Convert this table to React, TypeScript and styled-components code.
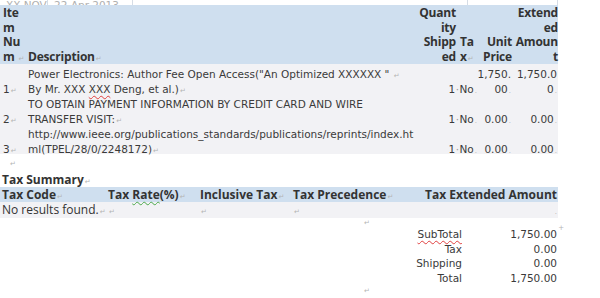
import React from 'react';
import styled, { createGlobalStyle } from 'styled-components';

const GlobalStyle = createGlobalStyle`
  html, body {
    margin: 0;
    padding: 0;
    background: #ffffff;
  }
`;

const COLS = '25px 395px 37px 24px 33px 44px';
const TAX_COLS = '106px 92px 93px 109px 158px';

const Sheet = styled.div`
  position: relative;
  width: 600px;
  height: 298px;
  overflow: hidden;
  background: #ffffff;
  color: #3a3a3a;
  font-family: 'DejaVu Sans', 'Liberation Sans', sans-serif;
  font-size: 10.5px;
`;

const TopStrip = styled.div`
  display: grid;
  grid-template-columns: 48px 85px 335px 90px;
  width: 558px;
  height: 5px;
  overflow: hidden;
`;

const StripCell = styled.div`
  display: flex;
  align-items: flex-end;
  padding-left: 6px;
  border-right: 1px solid #d6dde6;
  color: #b0b0b0;
  line-height: 10px;
  white-space: nowrap;
`;

const HeadRow = styled.div`
  display: grid;
  grid-template-columns: ${COLS};
  width: 558px;
  padding-top: 1px;
  background: #cfdfef;
  font-family: 'Open Sans', 'DejaVu Sans', sans-serif;
  font-weight: 700;
  font-size: 12px;
  letter-spacing: -0.2px;
  line-height: 14.5px;
  color: #333333;
`;

const BodyRow = styled.div`
  display: grid;
  grid-template-columns: ${COLS};
  width: 558px;
  height: 30px;
  background: #f2f2f5;
  line-height: 15px;
`;

const Cell = styled.div<{ $align?: 'left' | 'right'; $pr?: number; $span?: number }>`
  display: flex;
  flex-direction: column;
  justify-content: flex-end;
  align-items: ${({ $align }) => ($align === 'right' ? 'flex-end' : 'stretch')};
  grid-column: ${({ $span }) => ($span ? `span ${$span}` : 'auto')};
  text-align: ${({ $align }) => $align ?? 'left'};
  padding: 0 ${({ $pr }) => $pr ?? 1}px 0 3px;
  white-space: nowrap;
  ${BodyRow} & {
    margin-bottom: -3px;
  }
`;

const Mark = styled.span`
  color: #b4b4b4;
  font-family: 'DejaVu Sans', sans-serif;
  font-weight: 400;
  font-size: 7px;
  line-height: 0;
  margin-left: 1px;
`;

const Dot = styled.span`
  color: #9a9a9a;
  line-height: 0;
  margin: 0 0.5px;
`;

const Squiggle = styled.span<{ $tone?: 'red' | 'green' }>`
  text-decoration: underline wavy ${({ $tone }) => ($tone === 'green' ? '#4aa84a' : '#e04040')};
  text-decoration-thickness: 1px;
  text-underline-offset: 2px;
`;

const Para = styled.div<{ $indent: number; $height: number }>`
  height: ${({ $height }) => $height}px;
  padding-left: ${({ $indent }) => $indent}px;
  display: flex;
  align-items: center;
`;

const SectionTitle = styled.div`
  font-family: 'Open Sans', 'DejaVu Sans', sans-serif;
  font-weight: 700;
  font-size: 12px;
  line-height: 14px;
  color: #333333;
  padding-left: 2px;
`;

const TaxRow = styled.div<{ $head?: boolean }>`
  display: grid;
  grid-template-columns: ${TAX_COLS};
  width: 558px;
  height: ${({ $head }) => ($head ? '15px' : '16px')};
  line-height: ${({ $head }) => ($head ? '15px' : '16px')};
  background: ${({ $head }) => ($head ? '#cfdfef' : '#f2f2f5')};
  font-family: 'Open Sans', 'DejaVu Sans', sans-serif;
  font-weight: ${({ $head }) => ($head ? 700 : 400)};
  font-size: 12px;
  color: #333333;
`;

const TaxCell = styled.div<{ $align?: 'left' | 'right' }>`
  padding: 0 1px 0 2px;
  text-align: ${({ $align }) => $align ?? 'left'};
  white-space: nowrap;
`;

const Totals = styled.div`
  display: grid;
  grid-template-columns: 80px 96px;
  width: 176px;
  margin-left: 382px;
  line-height: 14.5px;
  font-size: 10.5px;
  color: #3a3a3a;
`;

const TotalLabel = styled.div`
  text-align: right;
`;

const TotalValue = styled.div`
  position: relative;
  text-align: right;
  padding-right: 1px;
`;

const Corner = styled.span`
  position: absolute;
  right: -6px;
  top: -4px;
  color: #b4b4b4;
  font-size: 7px;
  line-height: 10px;
`;

type Item = {
  no: string;
  desc: React.ReactNode[];
  unit: string[];
  ext: string[];
};

const items: Item[] = [
  {
    no: '1',
    desc: [
      <>Power Electronics: Author Fee Open Access("An Optimized XXXXXX "  <Mark>↵</Mark></>,
      <>By Mr. XXX <Squiggle>XXX</Squiggle> Deng, et al.)<Mark>↵</Mark></>,
    ],
    unit: ['1,750.', '00'],
    ext: ['1,750.0', '0'],
  },
  {
    no: '2',
    desc: [
      <>TO OBTAIN PAYMENT INFORMATION BY CREDIT CARD AND WIRE</>,
      <>TRANSFER VISIT:<Mark>↵</Mark></>,
    ],
    unit: ['0.00'],
    ext: ['0.00'],
  },
  {
    no: '3',
    desc: [
      <>http://www.ieee.org/publications_standards/publications/reprints/index.ht</>,
      <>ml(TPEL/28/0/2248172)<Mark>↵</Mark></>,
    ],
    unit: ['0.00'],
    ext: ['0.00'],
  },
];

const totals = [
  { label: <Squiggle>SubTotal</Squiggle>, value: '1,750.00' },
  { label: 'Tax', value: '0.00' },
  { label: 'Shipping', value: '0.00' },
  { label: 'Total', value: '1,750.00' },
];

export default function App() {
  return (
    <Sheet>
      <GlobalStyle />
      <TopStrip>
        <StripCell>XX-NOV</StripCell>
        <StripCell>22-Apr-2013</StripCell>
        <StripCell />
        <StripCell />
      </TopStrip>

      <HeadRow>
        <Cell>
          <span>Ite</span>
          <span>m</span>
          <span>Nu</span>
          <span>
            m <Mark>↵</Mark>
          </span>
        </Cell>
        <Cell>
          <span>
            Description<Mark>↵</Mark>
          </span>
        </Cell>
        <Cell $align="right">
          <span>Quant</span>
          <span>ity</span>
          <span>Shipp</span>
          <span>ed</span>
        </Cell>
        <Cell>
          <span>Ta</span>
          <span>
            x<Mark>↵</Mark>
          </span>
        </Cell>
        <Cell $align="right" $pr={2}>
          <span>Unit</span>
          <span>Price</span>
        </Cell>
        <Cell $align="right" $pr={0}>
          <span>Extend</span>
          <span>ed</span>
          <span>Amoun</span>
          <span>t</span>
        </Cell>
      </HeadRow>

      {items.map((item) => (
        <BodyRow key={item.no}>
          <Cell>
            <span>
              {item.no}
              <Mark>↵</Mark>
            </span>
          </Cell>
          <Cell>
            {item.desc.map((line, i) => (
              <span key={i}>{line}</span>
            ))}
          </Cell>
          <Cell $align="right" $span={2} $pr={4}>
            <span>
              1<Dot>·</Dot>No<Mark>.</Mark>
            </span>
          </Cell>
          <Cell $align="right" $pr={3}>
            {item.unit.map((v, i) => (
              <span key={i}>
                {v}
                {i === item.unit.length - 1 && <Mark>.</Mark>}
              </span>
            ))}
          </Cell>
          <Cell $align="right" $pr={1}>
            {item.ext.map((v, i) => (
              <span key={i}>
                {v}
                {i === item.ext.length - 1 && <Mark>.</Mark>}
              </span>
            ))}
          </Cell>
        </BodyRow>
      ))}

      <Para $indent={9} $height={19}>
        <Mark>↵</Mark>
      </Para>
      <SectionTitle>
        Tax Summary<Mark>↵</Mark>
      </SectionTitle>
      <TaxRow $head>
        <TaxCell>
          Tax Code<Mark>↵</Mark>
        </TaxCell>
        <TaxCell>
          Tax <Squiggle $tone="green">Rate</Squiggle>(%)<Mark>↵</Mark>
        </TaxCell>
        <TaxCell>
          Inclusive Tax<Mark>↵</Mark>
        </TaxCell>
        <TaxCell>
          Tax Precedence<Mark>↵</Mark>
        </TaxCell>
        <TaxCell $align="right">Tax Extended Amount</TaxCell>
      </TaxRow>
      <TaxRow>
        <TaxCell>
          No results found.<Mark>↵</Mark>
        </TaxCell>
        <TaxCell>
          <Mark>↵</Mark>
        </TaxCell>
        <TaxCell>
          <Mark>↵</Mark>
        </TaxCell>
        <TaxCell>
          <Mark>↵</Mark>
        </TaxCell>
        <TaxCell $align="right">
          <Mark>.</Mark>
        </TaxCell>
      </TaxRow>
      <Para $indent={363} $height={9}>
        <Mark>↵</Mark>
      </Para>

      <Totals>
        {totals.map((t, i) => (
          <React.Fragment key={i}>
            <TotalLabel>{t.label}</TotalLabel>
            <TotalValue>
              {t.value}
              {i === 0 && <Corner>+</Corner>}
            </TotalValue>
          </React.Fragment>
        ))}
      </Totals>
      <Para $indent={363} $height={12}>
        <Mark>↵</Mark>
      </Para>
    </Sheet>
  );
}
